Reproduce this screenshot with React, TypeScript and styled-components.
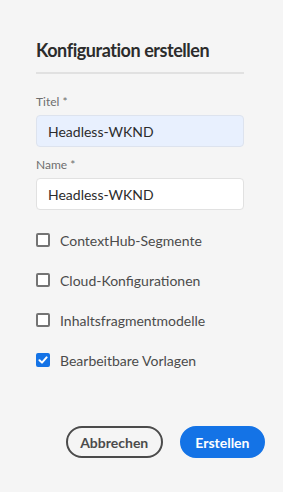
import React from "react";
import styled, { createGlobalStyle } from "styled-components";

const Global = createGlobalStyle`
  html, body { margin: 0; padding: 0; background: #f5f5f5; }
  body { font-family: "Lato", "Noto Sans", sans-serif; }
  * { box-sizing: border-box; }
`;

const Dialog = styled.div`
  width: 283px;
  height: 492px;
  padding: 38px 39px 0 36px;
  display: flex;
  flex-direction: column;
`;

const Heading = styled.h2`
  margin: 0;
  font-size: 18px;
  line-height: 24px;
  font-weight: 700;
  color: #2c2c2c;
  letter-spacing: -0.45px;
`;

const Divider = styled.div`
  height: 2px;
  background: #e1e1e1;
  margin-top: 10px;
  margin-bottom: 20px;
`;

const Field = styled.div`
  display: flex;
  flex-direction: column;
  margin-bottom: 10px;
`;

const Label = styled.label`
  font-size: 12px;
  line-height: 16px;
  color: #6e6e6e;
  margin-bottom: 5px;
`;

const Input = styled.input<{ $filled?: boolean }>`
  height: 32px;
  width: 100%;
  border: 1px solid ${(p) => (p.$filled ? "#dde3ee" : "#e1e1e1")};
  border-radius: 4px;
  background: ${(p) => (p.$filled ? "#e8f0fe" : "#ffffff")};
  padding: 0 11px;
  font-family: inherit;
  font-size: 14px;
  color: #2c2c2c;
  outline: none;
`;

const Options = styled.div`
  display: flex;
  flex-direction: column;
  gap: 18px;
  margin-top: 9px;
`;

const Option = styled.label`
  display: flex;
  align-items: center;
  gap: 10px;
  height: 22px;
  font-size: 14px;
  color: #4b4b4b;
`;

const Box = styled.span<{ $checked?: boolean }>`
  width: 14px;
  height: 14px;
  border-radius: 2px;
  flex: none;
  border: 2px solid ${(p) => (p.$checked ? "#1473e6" : "#747474")};
  background: ${(p) => (p.$checked ? "#1473e6" : "#ffffff")};
  display: flex;
  align-items: center;
  justify-content: center;
`;

const Footer = styled.div`
  display: flex;
  justify-content: flex-end;
  gap: 17px;
  margin-top: 55px;
  margin-right: -21px;
`;

const Button = styled.button<{ $primary?: boolean }>`
  height: 32px;
  border-radius: 16px;
  padding: 0 ${(p) => (p.$primary ? "13.5px" : "12.5px")};
  font-family: inherit;
  font-size: 14px;
  font-weight: 700;
  border: 2px solid ${(p) => (p.$primary ? "#1473e6" : "#4b4b4b")};
  background: ${(p) => (p.$primary ? "#1473e6" : "transparent")};
  color: ${(p) => (p.$primary ? "#ffffff" : "#4b4b4b")};
`;

const Check = () => (
  <svg width="10" height="10" viewBox="0 0 10 10">
    <path d="M1.5 5.2 L4 7.6 L8.6 2.4" fill="none" stroke="#fff" strokeWidth="2" strokeLinecap="round" strokeLinejoin="round" />
  </svg>
);

const options = [
  { label: "ContextHub-Segmente", checked: false },
  { label: "Cloud-Konfigurationen", checked: false },
  { label: "Inhaltsfragmentmodelle", checked: false },
  { label: "Bearbeitbare Vorlagen", checked: true },
];

export default function App() {
  return (
    <>
      <Global />
      <Dialog>
        <Heading>Konfiguration erstellen</Heading>
        <Divider />
        <Field>
          <Label>Titel *</Label>
          <Input $filled defaultValue="Headless-WKND" />
        </Field>
        <Field>
          <Label>Name *</Label>
          <Input defaultValue="Headless-WKND" />
        </Field>
        <Options>
          {options.map((o) => (
            <Option key={o.label}>
              <Box $checked={o.checked}>{o.checked && <Check />}</Box>
              {o.label}
            </Option>
          ))}
        </Options>
        <Footer>
          <Button>Abbrechen</Button>
          <Button $primary>Erstellen</Button>
        </Footer>
      </Dialog>
    </>
  );
}
